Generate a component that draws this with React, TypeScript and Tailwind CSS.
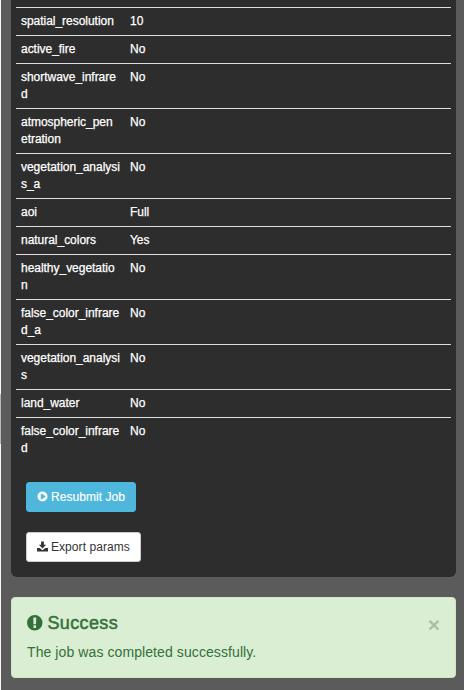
import React from "react";

type Param = { name: string[]; value: string };

const params: Param[] = [
  { name: ["spatial_resolution"], value: "10" },
  { name: ["active_fire"], value: "No" },
  { name: ["shortwave_infrare", "d"], value: "No" },
  { name: ["atmospheric_pen", "etration"], value: "No" },
  { name: ["vegetation_analysi", "s_a"], value: "No" },
  { name: ["aoi"], value: "Full" },
  { name: ["natural_colors"], value: "Yes" },
  { name: ["healthy_vegetatio", "n"], value: "No" },
  { name: ["false_color_infrare", "d_a"], value: "No" },
  { name: ["vegetation_analysi", "s"], value: "No" },
  { name: ["land_water"], value: "No" },
  { name: ["false_color_infrare", "d"], value: "No" },
];

function PlayIcon() {
  return (
    <svg className="mr-[3px] mb-px size-[11px] shrink-0" viewBox="0 0 22 22" fill="currentColor">
      <path fillRule="evenodd" d="M11 1a10 10 0 1 1 0 20a10 10 0 1 1 0-20zM7.500 5.500v11q0 1 1 .5l8.500-5.300q.8-.7 0-1.400L8.500 5q-1-.5-1 .5z" />
    </svg>
  );
}

function DownloadIcon() {
  return (
    <svg className="mr-[3px] mb-px h-[11px] w-[11px] shrink-0" viewBox="0 0 22 22" fill="currentColor">
      <path d="M8.200 1h5.600v6.500h4.400L11 15L3.800 7.500h4.400zM0 14h5.500l4 3.500q1.500 1 3 0l4-3.500H22v7H0z" />
    </svg>
  );
}

function ExclamationIcon() {
  return (
    <svg className="mr-[5px] size-[15.500px] shrink-0" viewBox="0 0 1536 1536" fill="currentColor">
      <path fillRule="evenodd" d="M768 0a768 768 0 1 1 0 1536a768 768 0 1 1 0-1536zM896 1247v-190q0-14-9-23.500t-22-9.500H673q-13 0-23 10t-10 23v190q0 13 10 23t23 10h192q13 0 22-9.500t9-23.500zM894 903l18-621q0-12-10-18q-10-8-24-8H658q-14 0-24 8q-10 6-10 18l17 621q0 10 10 17.500t24 7.500h185q14 0 23.500-7.500T894 903z" />
    </svg>
  );
}

export default function App() {
  return (
    <div className="flex h-[690px] w-[464px] overflow-hidden bg-[#5b5b5b] font-['Liberation_Sans',Arial,sans-serif] text-white">
      <div className="flex w-px shrink-0 flex-col bg-[#f8f8f8] pt-[394px]">
        <div className="h-[50px] bg-[#b8b8b8]" />
      </div>
      <main className="ml-2.5 w-[445px]">
        <section className="h-[577px] rounded-b-[6px] bg-[#2d2d2d] px-[5px] pt-[7px]">
          <dl className="text-[12px] leading-[17px] tracking-[-0.03px] [-webkit-text-stroke:0.25px_currentColor]">
            {params.map((p) => (
              <div key={p.name.join("")} className="flex border-t border-[#ddd] px-[5px] py-[5px]">
                <dt className="w-[109px] shrink-0 whitespace-nowrap">
                  {p.name.map((line) => (
                    <span key={line} className="block">{line}</span>
                  ))}
                </dt>
                <dd>{p.value}</dd>
              </div>
            ))}
          </dl>
          <div className="flex flex-col items-start gap-5 pt-[20px] pl-[10px] text-[12px] leading-[18px] tracking-[0.06px]">
            <button className="flex h-[30px] w-[110px] items-center rounded-[3px] border border-[#46b8da] bg-[#4fb7db] pl-[10px] whitespace-nowrap [-webkit-text-stroke:0.15px_currentColor]">
              <PlayIcon />Resubmit Job
            </button>
            <button className="flex h-[30px] w-[115px] items-center rounded-[3px] border border-[#ccc] bg-white pl-[10px] whitespace-nowrap text-[#333]">
              <DownloadIcon />Export params
            </button>
          </div>
        </section>
        <section className="mt-5 flex h-[81px] justify-between rounded-[4px] border border-[#d0e6c0] bg-[#d9eed3] pt-[15px] pr-[15px] pl-[15px] text-[#34713a]">
          <div>
            <h4 className="flex h-5 items-center text-[18px] leading-5 tracking-[0.35px] [-webkit-text-stroke:0.5px_currentColor]">
              <ExclamationIcon /><span>Success</span>
            </h4>
            <p className="mt-[9px] text-[14px] leading-5 tracking-[0.09px]">The job was completed successfully.</p>
          </div>
          <button className="h-[21px] text-[21px] leading-[24px] font-bold text-black opacity-20">×</button>
        </section>
      </main>
    </div>
  );
}
